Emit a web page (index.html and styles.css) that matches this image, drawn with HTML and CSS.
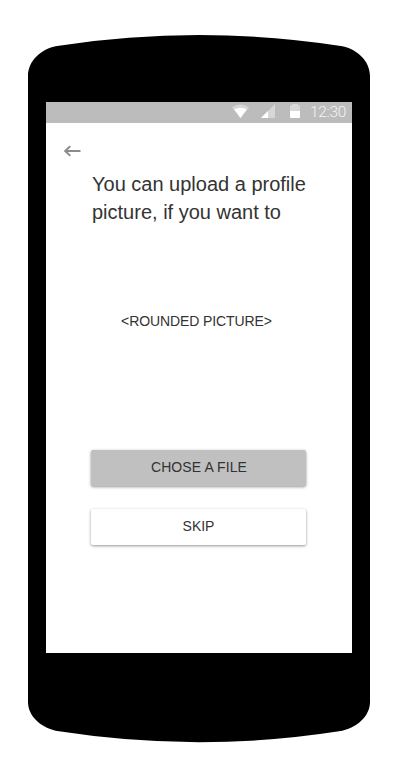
FILE: index.html
```html
<!DOCTYPE html>
<html lang="en">
<head>
<meta charset="utf-8">
<title>Profile picture</title>
<link rel="stylesheet" href="styles.css">
</head>
<body>
<div class="phone">
  <svg class="phone-body" viewBox="0 0 342 708" aria-hidden="true">
    <path d="M0 41C0 26 13 13 31 10.700Q171 -10.600 311 10.700C329 13 342 26 342 41V667C342 681 329 693.500 311 696.300Q171 718.100 31 696.300C13 693.500 0 681 0 667Z"/>
  </svg>
  <main class="screen">
    <header class="status">
      <svg class="wifi" viewBox="0 0 18 15"><path class="dim" d="M0 3.200Q9 -2.800 18 3.200L9 14.500Z"/><path d="M2.300 5.200Q9 1.600 15.700 5.200L9 14.500Z"/></svg>
      <svg class="signal" viewBox="0 0 14 14"><path class="dim" d="M14 0V14H0Z"/><path d="M7 7V14H0Z"/></svg>
      <svg class="battery" viewBox="0 0 10 14"><path class="dim" d="M0 2.500Q0 1 2 1V0H8V1Q10 1 10 2.500V7H0Z"/><path d="M0 7H10V13Q10 14 9 14H1Q0 14 0 13Z"/></svg>
      <span class="time">12:30</span>
    </header>
    <svg class="back" viewBox="0 0 17 12"><path d="M16.500 6H1.500M6.300 1.100L1.300 6L6.300 10.900"/></svg>
    <section class="content">
      <h1>You can upload a profile<br>picture, if you want to</h1>
      <div class="picture">&lt;ROUNDED PICTURE&gt;</div>
      <button class="button primary">CHOSE A FILE</button>
      <button class="button">SKIP</button>
    </section>
  </main>
</div>
</body>
</html>
```

FILE: styles.css
```css
* { box-sizing: border-box; }
body {
  margin: 0;
  padding: 34.500px 0 0 28px;
  background: #fff;
  color: #333;
  font-family: "Liberation Sans", Arial, sans-serif;
}
.phone {
  position: relative;
  width: 342px;
  height: 708px;
  padding: 67.500px 18px 0;
}
.phone-body {
  position: absolute;
  inset: 0;
  width: 342px;
  height: 708px;
}
.screen {
  position: relative;
  height: 551px;
  background: #fff;
}
.status {
  display: flex;
  height: 21px;
  padding-left: 186px;
  background: #bcbcbc;
  color: #f4f4f4;
}
.status svg { fill: #fff; flex: none; }
.status .dim { fill: #d7d7d7; }
.wifi { width: 17px; height: 15px; margin-top: 2px; }
.signal { width: 14px; height: 14px; margin: 2px 0 0 12px; }
.battery { width: 10px; height: 14px; margin: 2px 0 0 15px; }
.time {
  margin-left: 10px;
  font: 300 15.500px/21px Roboto, sans-serif;
  letter-spacing: -.3px;
}
.back {
  display: block;
  width: 17px;
  height: 12px;
  margin: 22px 0 0 18px;
  fill: none;
  stroke: #8c8c8c;
  stroke-width: 2;
}
.content {
  display: flex;
  flex-direction: column;
  width: 215px;
  margin: 13px 0 0 45px;
}
h1 {
  margin: 0 0 0 1px;
  font-size: 20px;
  font-weight: 400;
  line-height: 28px;
  white-space: nowrap;
}
.picture {
  margin: 87px 0 121px -4px;
  font-size: 14px;
  line-height: 16px;
  letter-spacing: -.1px;
  text-align: center;
}
.button {
  height: 36px;
  margin: 0 0 23px;
  padding: 0 0 2px;
  border: 0;
  border-radius: 2px;
  background: #fff;
  box-shadow: 0 1px 3px rgba(0, 0, 0, .42);
  color: #333;
  font: 14px/16px "Liberation Sans", Arial, sans-serif;
}
.primary {
  background: #c0c0c0;
  padding-left: 1px;
  letter-spacing: .1px;
}
```
